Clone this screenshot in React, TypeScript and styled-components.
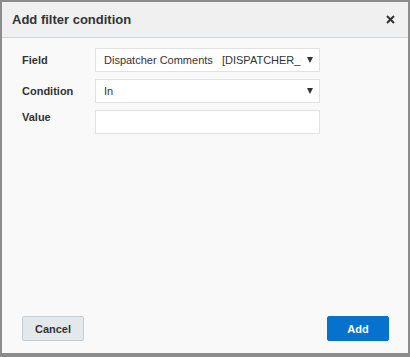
import React from "react";
import styled, { createGlobalStyle } from "styled-components";

const GlobalStyle = createGlobalStyle`
  html, body {
    margin: 0;
    padding: 0;
    background: #8c8c8c;
  }
  body {
    font-family: "Liberation Sans", Arial, sans-serif;
  }
`;

const Backdrop = styled.div`
  width: 410px;
  height: 357px;
  background: #8c8c8c;
  padding: 2px 2px 0 2px;
  box-sizing: border-box;
`;

const Dialog = styled.div`
  width: 406px;
  height: 351px;
  background: #f9f9f9;
  display: flex;
  flex-direction: column;
`;

const Header = styled.div`
  height: 35px;
  background: #f0f0f0;
  border-bottom: 1px solid #cfd4d8;
  display: flex;
  align-items: center;
  justify-content: space-between;
  padding: 0 12px 0 10px;
`;

const Title = styled.h1`
  margin: 0;
  font-size: 13px;
  font-weight: bold;
  color: #333;
`;

const CloseButton = styled.button`
  border: 0;
  background: none;
  padding: 0;
  width: 12px;
  height: 12px;
  display: flex;
  align-items: center;
  justify-content: center;
  cursor: pointer;
`;

const Form = styled.div`
  flex: 1;
  display: flex;
  flex-direction: column;
  gap: 7px;
  padding: 10px 0 0 20px;
`;

const Row = styled.div<{ $top?: boolean }>`
  display: flex;
  align-items: ${({ $top }) => ($top ? "flex-start" : "center")};
`;

const Label = styled.label<{ $top?: boolean }>`
  width: 73px;
  font-size: 11px;
  font-weight: bold;
  color: #333;
  padding-top: ${({ $top }) => ($top ? "1px" : "0")};
`;

const Box = styled.div`
  width: 225px;
  height: 24px;
  box-sizing: border-box;
  background: #fff;
  border: 1px solid #dfe3e6;
  display: flex;
  align-items: center;
  padding: 0 6px 0 8px;
  font-size: 11px;
  color: #333;
`;

const BoxText = styled.span`
  flex: 1;
  white-space: pre;
  overflow: hidden;
  margin-right: 6px;
`;

const Arrow = styled.span`
  width: 0;
  height: 0;
  border-left: 3.5px solid transparent;
  border-right: 3.5px solid transparent;
  border-top: 6px solid #333;
`;

const Footer = styled.div`
  display: flex;
  justify-content: space-between;
  padding: 0 19px 12px 20px;
`;

const Button = styled.button<{ $primary?: boolean }>`
  width: 62px;
  height: 25px;
  box-sizing: border-box;
  border-radius: 2px;
  font-family: "Liberation Sans", Arial, sans-serif;
  font-size: 11px;
  font-weight: bold;
  cursor: pointer;
  border: 1px solid ${({ $primary }) => ($primary ? "#0572ce" : "#c4ced7")};
  background: ${({ $primary }) => ($primary ? "#0572ce" : "#e4e8ea")};
  color: ${({ $primary }) => ($primary ? "#fff" : "#333")};
`;

const App = () => {
  return (
    <>
      <GlobalStyle />
      <Backdrop>
        <Dialog>
          <Header>
            <Title>Add filter condition</Title>
            <CloseButton aria-label="Close">
              <svg width="9" height="9" viewBox="0 0 9 9">
                <path d="M1 1L8 8M8 1L1 8" stroke="#333" strokeWidth="2" />
              </svg>
            </CloseButton>
          </Header>
          <Form>
            <Row>
              <Label>Field</Label>
              <Box>
                <BoxText>{"Dispatcher Comments   [DISPATCHER_COMMENTS]"}</BoxText>
                <Arrow />
              </Box>
            </Row>
            <Row>
              <Label>Condition</Label>
              <Box>
                <BoxText>In</BoxText>
                <Arrow />
              </Box>
            </Row>
            <Row $top>
              <Label $top>Value</Label>
              <Box />
            </Row>
          </Form>
          <Footer>
            <Button>Cancel</Button>
            <Button $primary>Add</Button>
          </Footer>
        </Dialog>
      </Backdrop>
    </>
  );
};

export default App;
